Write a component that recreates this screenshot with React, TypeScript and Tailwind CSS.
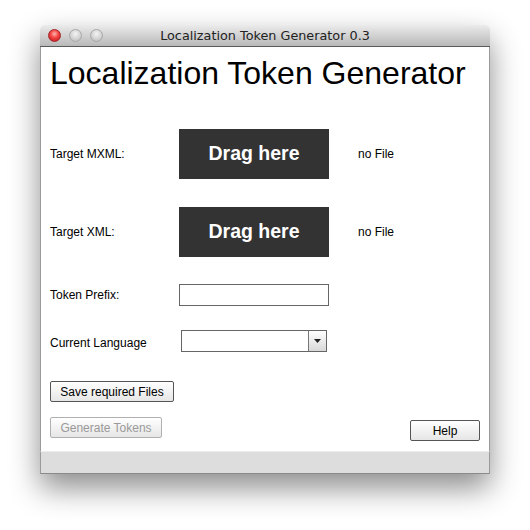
import React from "react";

const DropZone = () => (
  <div className="flex h-[50px] w-[150px] items-center justify-center bg-[#333333] text-[19.5px] font-bold text-white">
    Drag here
  </div>
);

const Btn = ({ label, disabled, className = "" }: { label: string; disabled?: boolean; className?: string }) => (
  <button
    className={
      "flex h-[21px] items-center justify-center rounded-[2px] border bg-gradient-to-b from-white to-[#e6e6e6] text-[12px] " +
      (disabled ? "border-[#b0b0b0] text-[#9a9a9a] " : "border-[#555] text-black ") +
      className
    }
  >
    {label}
  </button>
);

export default function App() {
  return (
    <div className="h-[530px] w-[530px] bg-white pl-[40px] pt-[25px] font-['Liberation_Sans',Arial,sans-serif]">
      <div className="flex w-[450px] flex-col rounded-t-[5px] shadow-[0_14px_30px_rgba(0,0,0,0.45)]">
        {/* title bar */}
        <div className="relative flex h-[22px] items-center rounded-t-[5px] border-b border-[#5a5a5a] bg-gradient-to-b from-[#ebebeb] to-[#b9b9b9]">
          <div className="flex gap-[8px] pl-[8px]">
            <span className="h-[13px] w-[13px] rounded-full border border-[#a3242a] bg-[radial-gradient(circle_at_50%_35%,#ffb3b0_0%,#f2423f_45%,#b8161c_100%)]" />
            <span className="h-[13px] w-[13px] rounded-full border border-[#a8a8a8] bg-[radial-gradient(circle_at_50%_35%,#f4f4f4_0%,#d6d6d6_50%,#b7b7b7_100%)]" />
            <span className="h-[13px] w-[13px] rounded-full border border-[#a8a8a8] bg-[radial-gradient(circle_at_50%_35%,#f4f4f4_0%,#d6d6d6_50%,#b7b7b7_100%)]" />
          </div>
          <div className="absolute inset-0 flex items-center justify-center pt-[1px] font-['DejaVu_Sans',sans-serif] text-[12.8px] text-[#222]">
            Localization Token Generator 0.3
          </div>
        </div>

        {/* content */}
        <div className="flex h-[404px] flex-col border-x border-[#9a9a9a] bg-white pl-[9px] pr-[9px]">
          <h1 className="mt-[11px] h-[31px] text-[32px] leading-[31px] text-black">Localization Token Generator</h1>

          <div className="mt-[40px] flex items-center text-[12px]">
            <div className="w-[129px]">Target MXML:</div>
            <DropZone />
            <div className="ml-[29px]">no File</div>
          </div>

          <div className="mt-[28px] flex items-center text-[12px]">
            <div className="w-[129px]">Target XML:</div>
            <DropZone />
            <div className="ml-[29px]">no File</div>
          </div>

          <div className="mt-[27px] flex items-center text-[12px]">
            <div className="w-[129px]">Token Prefix:</div>
            <div className="h-[22px] w-[150px] border border-[#666] bg-white" />
          </div>

          <div className="mt-[24px] flex items-center text-[12px]">
            <div className="mt-[3px] w-[131px]">Current Language</div>
            <div className="flex h-[22px] w-[146px] border border-[#666] bg-white">
              <div className="flex-1" />
              <div className="flex w-[18px] items-center justify-center border-l border-[#777] bg-gradient-to-b from-white to-[#d8d8d8]">
                <svg width="7" height="4" viewBox="0 0 7 4">
                  <path d="M0 0h7L3.5 4z" fill="#222" />
                </svg>
              </div>
            </div>
          </div>

          <div className="mt-[29px] flex">
            <Btn label="Save required Files" className="w-[124px]" />
          </div>

          <div className="mt-[15px] flex justify-between">
            <Btn label="Generate Tokens" disabled className="w-[112px]" />
            <Btn label="Help" className="mt-[3px] w-[70px]" />
          </div>
        </div>

        {/* footer */}
        <div className="h-[23px] border border-t-[#ececec] border-x-[#9a9a9a] border-b-[#8a8a8a] bg-[#dddddd]" />
      </div>
    </div>
  );
}
